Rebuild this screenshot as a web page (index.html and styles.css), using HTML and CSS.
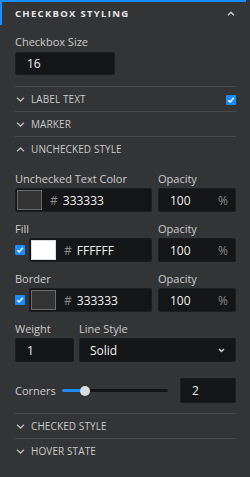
FILE: index.html
```html
<!DOCTYPE html>
<html lang="en">
<head>
  <meta charset="UTF-8">
  <meta name="viewport" content="width=device-width, initial-scale=1.0">
  <title>Checkbox Styling</title>
  <link rel="stylesheet" href="styles.css">
</head>
<body>
  <div class="panel">
    <div class="panel-header">
      <span class="panel-title">CHECKBOX STYLING</span>
      <svg class="header-chevron" width="8" height="5" viewBox="0 0 8 5"><polyline points="1,4.2 4,1.2 7,4.2" fill="none" stroke="#c8c8c8" stroke-width="1.5"/></svg>
    </div>

    <div class="panel-body">
      <div class="field size-field">
        <label>Checkbox Size</label>
        <div class="box size-box">16</div>
      </div>

      <div class="section">
        <div class="section-head">
          <svg class="chevron" width="9" height="5" viewBox="0 0 9 5"><polyline points="1,0.8 4.5,4 8,0.8" fill="none" stroke="#bdbdbd" stroke-width="1.3"/></svg>
          <span class="section-title">LABEL TEXT</span>
          <span class="checkbox head-check">
            <svg width="10" height="10" viewBox="0 0 10 10"><polyline points="2.2,5.2 4.2,7 7.8,2.8" fill="none" stroke="#fff" stroke-width="1.5"/></svg>
          </span>
        </div>
      </div>

      <div class="section">
        <div class="section-head">
          <svg class="chevron" width="9" height="5" viewBox="0 0 9 5"><polyline points="1,0.8 4.5,4 8,0.8" fill="none" stroke="#bdbdbd" stroke-width="1.3"/></svg>
          <span class="section-title">MARKER</span>
        </div>
      </div>

      <div class="section open">
        <div class="section-head">
          <svg class="chevron" width="9" height="5" viewBox="0 0 9 5"><polyline points="1,4.2 4.5,1 8,4.2" fill="none" stroke="#bdbdbd" stroke-width="1.3"/></svg>
          <span class="section-title">UNCHECKED STYLE</span>
        </div>
        <div class="section-body">
          <div class="row">
            <div class="field col-main">
              <label>Unchecked Text Color</label>
              <div class="box color-box">
                <span class="swatch swatch-dark"></span>
                <span class="hash">#</span>
                <span class="hex">333333</span>
              </div>
            </div>
            <div class="field col-side">
              <label>Opacity</label>
              <div class="box pct-box"><span>100</span><span class="unit">%</span></div>
            </div>
          </div>

          <div class="row">
            <div class="field col-main">
              <label>Fill</label>
              <div class="check-line">
                <span class="checkbox">
                  <svg width="10" height="10" viewBox="0 0 10 10"><polyline points="2.2,5.2 4.2,7 7.8,2.8" fill="none" stroke="#fff" stroke-width="1.5"/></svg>
                </span>
                <div class="box color-box">
                  <span class="swatch swatch-white"></span>
                  <span class="hash">#</span>
                  <span class="hex">FFFFFF</span>
                </div>
              </div>
            </div>
            <div class="field col-side">
              <label>Opacity</label>
              <div class="box pct-box"><span>100</span><span class="unit">%</span></div>
            </div>
          </div>

          <div class="row">
            <div class="field col-main">
              <label>Border</label>
              <div class="check-line">
                <span class="checkbox">
                  <svg width="10" height="10" viewBox="0 0 10 10"><polyline points="2.2,5.2 4.2,7 7.8,2.8" fill="none" stroke="#fff" stroke-width="1.5"/></svg>
                </span>
                <div class="box color-box">
                  <span class="swatch swatch-dark"></span>
                  <span class="hash">#</span>
                  <span class="hex">333333</span>
                </div>
              </div>
            </div>
            <div class="field col-side">
              <label>Opacity</label>
              <div class="box pct-box"><span>100</span><span class="unit">%</span></div>
            </div>
          </div>

          <div class="row row-tight">
            <div class="field col-weight">
              <label>Weight</label>
              <div class="box">1</div>
            </div>
            <div class="field col-style">
              <label>Line Style</label>
              <div class="box select-box">
                <span>Solid</span>
                <svg width="7" height="5" viewBox="0 0 7 5"><polyline points="1,1 3.5,3.5 6,1" fill="none" stroke="#d0d0d0" stroke-width="1.4"/></svg>
              </div>
            </div>
          </div>

          <div class="corners">
            <span class="corners-label">Corners</span>
            <div class="slider">
              <div class="slider-fill"></div>
              <div class="slider-thumb"></div>
            </div>
            <div class="box corners-box">2</div>
          </div>
        </div>
      </div>

      <div class="section">
        <div class="section-head">
          <svg class="chevron" width="9" height="5" viewBox="0 0 9 5"><polyline points="1,0.8 4.5,4 8,0.8" fill="none" stroke="#bdbdbd" stroke-width="1.3"/></svg>
          <span class="section-title">CHECKED STYLE</span>
        </div>
      </div>

      <div class="section">
        <div class="section-head">
          <svg class="chevron" width="9" height="5" viewBox="0 0 9 5"><polyline points="1,0.8 4.5,4 8,0.8" fill="none" stroke="#bdbdbd" stroke-width="1.3"/></svg>
          <span class="section-title">HOVER STATE</span>
        </div>
      </div>
    </div>
  </div>
</body>
</html>
```

FILE: styles.css
```css
* {
  box-sizing: border-box;
  margin: 0;
  padding: 0;
}

body {
  font-family: 'Open Sans', sans-serif;
  background: #333436;
  color: #cfcfcf;
  width: 250px;
  height: 477px;
  overflow: hidden;
}

.panel {
  width: 246px;
}

.panel-header {
  height: 25px;
  border-top: 2px solid #1a8cff;
  border-left: 2px solid #1a8cff;
  display: flex;
  align-items: center;
  justify-content: space-between;
  padding: 0 11px 0 13px;
}

.panel-title {
  font-size: 9.5px;
  font-weight: 700;
  letter-spacing: 1.3px;
  color: #e8e8e8;
}

.header-chevron {
  margin-top: -1px;
}

.panel-body {
  padding: 10px 10px 0 15px;
}

.field {
  display: flex;
  flex-direction: column;
}

.field label {
  font-size: 11px;
  line-height: 14px;
  color: #cdcdcd;
  margin-bottom: 2px;
}

.size-field {
  margin-bottom: 11px;
}

.size-field label {
  margin-bottom: 3px;
}

.box {
  height: 24px;
  background: #141517;
  border: 1px solid #1c1d1f;
  border-radius: 2px;
  color: #f2f2f2;
  font-size: 12px;
  display: flex;
  align-items: center;
  padding-left: 11px;
}

.size-box {
  width: 100px;
  height: 23px;
}

.section {
  border-top: 1px solid #47484a;
}

.section-head {
  height: 24px;
  display: flex;
  align-items: center;
  padding-left: 1px;
}

.chevron {
  margin-right: 6px;
}

.section-title {
  font-size: 10px;
  color: #cacaca;
  letter-spacing: 0.1px;
  flex: 1;
}

.checkbox {
  width: 10px;
  height: 10px;
  background: #1a8cff;
  border-radius: 1px;
  display: flex;
  flex-shrink: 0;
}

.head-check {
  margin-top: 1px;
}

.section-body {
  padding: 11px 0 10px;
  display: flex;
  flex-direction: column;
  gap: 10px;
}

.row {
  display: flex;
  gap: 6px;
}

.row-tight {
  gap: 5px;
}

.col-main {
  width: 137px;
}

.col-side {
  width: 78px;
}

.col-weight {
  width: 59px;
}

.col-style {
  width: 157px;
}

.check-line {
  display: flex;
  align-items: center;
  gap: 4px;
}

.check-line .box {
  flex: 1;
}

.color-box {
  padding-left: 1px;
}

.swatch {
  width: 25px;
  height: 20px;
  border: 1px solid #6a6a6a;
  margin-right: 8px;
}

.swatch-dark {
  background: #333333;
}

.swatch-white {
  background: #ffffff;
  border-color: #dcdcdc;
}

.hash {
  color: #8a8a8a;
  margin-right: 5px;
}

.pct-box {
  justify-content: space-between;
  padding-right: 7px;
}

.unit {
  color: #8a8a8a;
}

.select-box {
  justify-content: space-between;
  padding-left: 10px;
  padding-right: 10px;
}

.corners {
  display: flex;
  align-items: center;
  height: 25px;
  margin-top: 6px;
}

.corners-label {
  font-size: 11px;
  color: #cdcdcd;
  width: 47px;
}

.slider {
  position: relative;
  width: 106px;
  height: 3px;
  background: #141517;
  border-radius: 2px;
  margin-right: 12px;
}

.slider-fill {
  width: 22px;
  height: 3px;
  background: #1a8cff;
  border-radius: 2px;
}

.slider-thumb {
  position: absolute;
  left: 18px;
  top: -3.5px;
  width: 10px;
  height: 10px;
  border-radius: 50%;
  background: #dcdcdc;
}

.corners-box {
  width: 56px;
  height: 25px;
}
```
